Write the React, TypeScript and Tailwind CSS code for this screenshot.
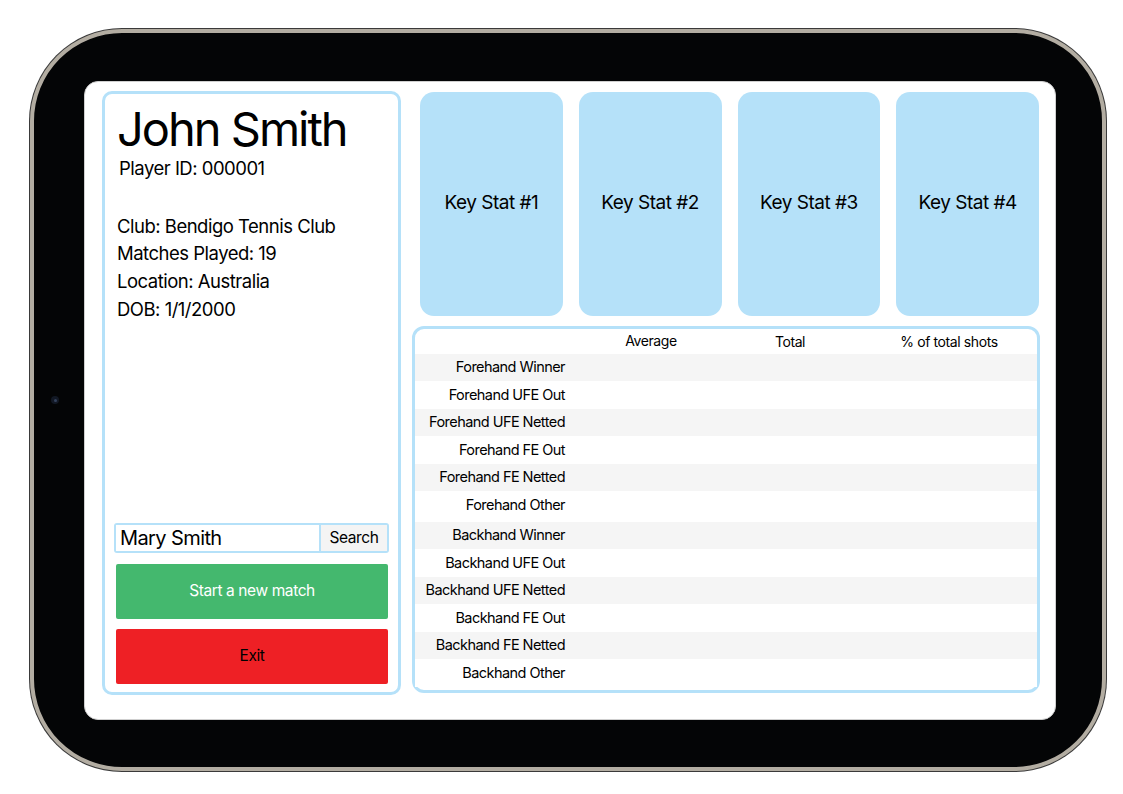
import React from "react";

const blue = "#b5e1f9";

const forehand = [
  "Forehand Winner",
  "Forehand UFE Out",
  "Forehand UFE Netted",
  "Forehand FE Out",
  "Forehand FE Netted",
  "Forehand Other",
];

const backhand = [
  "Backhand Winner",
  "Backhand UFE Out",
  "Backhand UFE Netted",
  "Backhand FE Out",
  "Backhand FE Netted",
  "Backhand Other",
];

function ShotRow({ label, shaded }: { label: string; shaded: boolean }) {
  return (
    <div
      className={`grid grid-cols-[150px_172px_106px_1fr] h-[27.5px] items-center ${
        shaded ? "bg-[#f5f5f5]" : "bg-white"
      }`}
    >
      <span className="text-right text-[14.5px] text-black tracking-[-0.55px]">{label}</span>
      <span />
      <span />
      <span />
    </div>
  );
}

function KeyStat({ n }: { n: number }) {
  return (
    <div className="flex-1 h-[224px] rounded-[14px] bg-[#b5e1f9] flex items-center justify-center">
      <span className="text-[19px] text-black tracking-[-0.5px]">Key Stat #{n}</span>
    </div>
  );
}

export default function App() {
  return (
    <div
      className="w-[1123px] h-[794px] bg-white pt-[29px] pl-[30px]"
      style={{ fontFamily: "Inter, 'Liberation Sans', sans-serif" }}
    >
      {/* device frame */}
      <div className="w-[1076px] h-[742px] rounded-[92px] bg-[#040506] border-[4px] border-[#b3ada2] shadow-[0_0_0_1px_#3a3a3a] flex items-center">
        <div className="w-[50px] flex items-center">
          <div className="ml-[17px] w-[8px] h-[8px] rounded-full bg-[#121824] flex items-center justify-center">
            <div className="w-[3px] h-[3px] rounded-full bg-[#34425c]" />
          </div>
        </div>

        {/* screen */}
        <div className="w-[972px] h-[639px] rounded-[14px] bg-white border border-[#cfcfcf] flex gap-[11px] pl-[17px] pt-[9px] pr-[15px]">
          {/* player panel */}
          <div
            className="w-[299px] h-[604px] rounded-[10px] border-[3px] flex flex-col pl-[10px] pr-[9px] pb-[8px]"
            style={{ borderColor: blue }}
          >
            <h1 className="mt-[10px] ml-[2px] text-[47px] leading-[50px] text-black tracking-[-2px]">John Smith</h1>
            <p className="ml-[4px] mt-[2px] text-[18.5px] leading-[24px] text-black tracking-[-0.5px]">Player ID: 000001</p>
            <div className="mt-[33px] ml-[2px] flex flex-col text-[18.5px] leading-[27.7px] text-black tracking-[-0.5px]">
              <span>Club: Bendigo Tennis Club</span>
              <span>Matches Played: 19</span>
              <span>Location: Australia</span>
              <span>DOB: 1/1/2000</span>
            </div>

            <div className="mt-auto -ml-[1px] flex h-[30px] border-[2px] rounded-[3px]" style={{ borderColor: blue }}>
              <div className="flex-1 bg-white flex items-center pl-[4px] text-[20px] text-black tracking-[-0.6px] border-r-[2px] border-[#b5e1f9]">
                Mary Smith
              </div>
              <div className="w-[66px] bg-[#f4f4f4] flex items-center justify-center text-[15.5px] text-black tracking-[-0.4px]">
                Search
              </div>
            </div>
            <button className="mt-[11px] ml-[1px] mr-[1px] h-[55px] rounded-[2px] bg-[#44b86e] text-white text-[15.5px] tracking-[-0.4px]">
              Start a new match
            </button>
            <button className="mt-[10px] ml-[1px] mr-[1px] h-[55px] rounded-[2px] bg-[#ee2025] text-black text-[15.5px] tracking-[-0.4px]">
              Exit
            </button>
          </div>

          {/* right column */}
          <div className="flex-1 flex flex-col gap-[10px]">
            <div className="flex gap-[16px] pl-[8px] pr-[1px] pt-[1px]">
              {[1, 2, 3, 4].map((n) => (
                <KeyStat key={n} n={n} />
              ))}
            </div>

            <div
              className="h-[367px] rounded-[12px] border-[3px] flex flex-col"
              style={{ borderColor: blue }}
            >
              <div className="grid grid-cols-[150px_172px_106px_1fr] h-[25px] items-center text-[14px] text-black tracking-[-0.4px]">
                <span />
                <span className="text-center -mt-[2px]">Average</span>
                <span className="text-center">Total</span>
                <span className="text-center pl-[18px]">% of total shots</span>
              </div>
              {forehand.map((l, i) => (
                <ShotRow key={l} label={l} shaded={i % 2 === 0} />
              ))}
              <div className="h-[3px]" />
              {backhand.map((l, i) => (
                <ShotRow key={l} label={l} shaded={i % 2 === 0} />
              ))}
            </div>
          </div>
        </div>
      </div>
    </div>
  );
}
